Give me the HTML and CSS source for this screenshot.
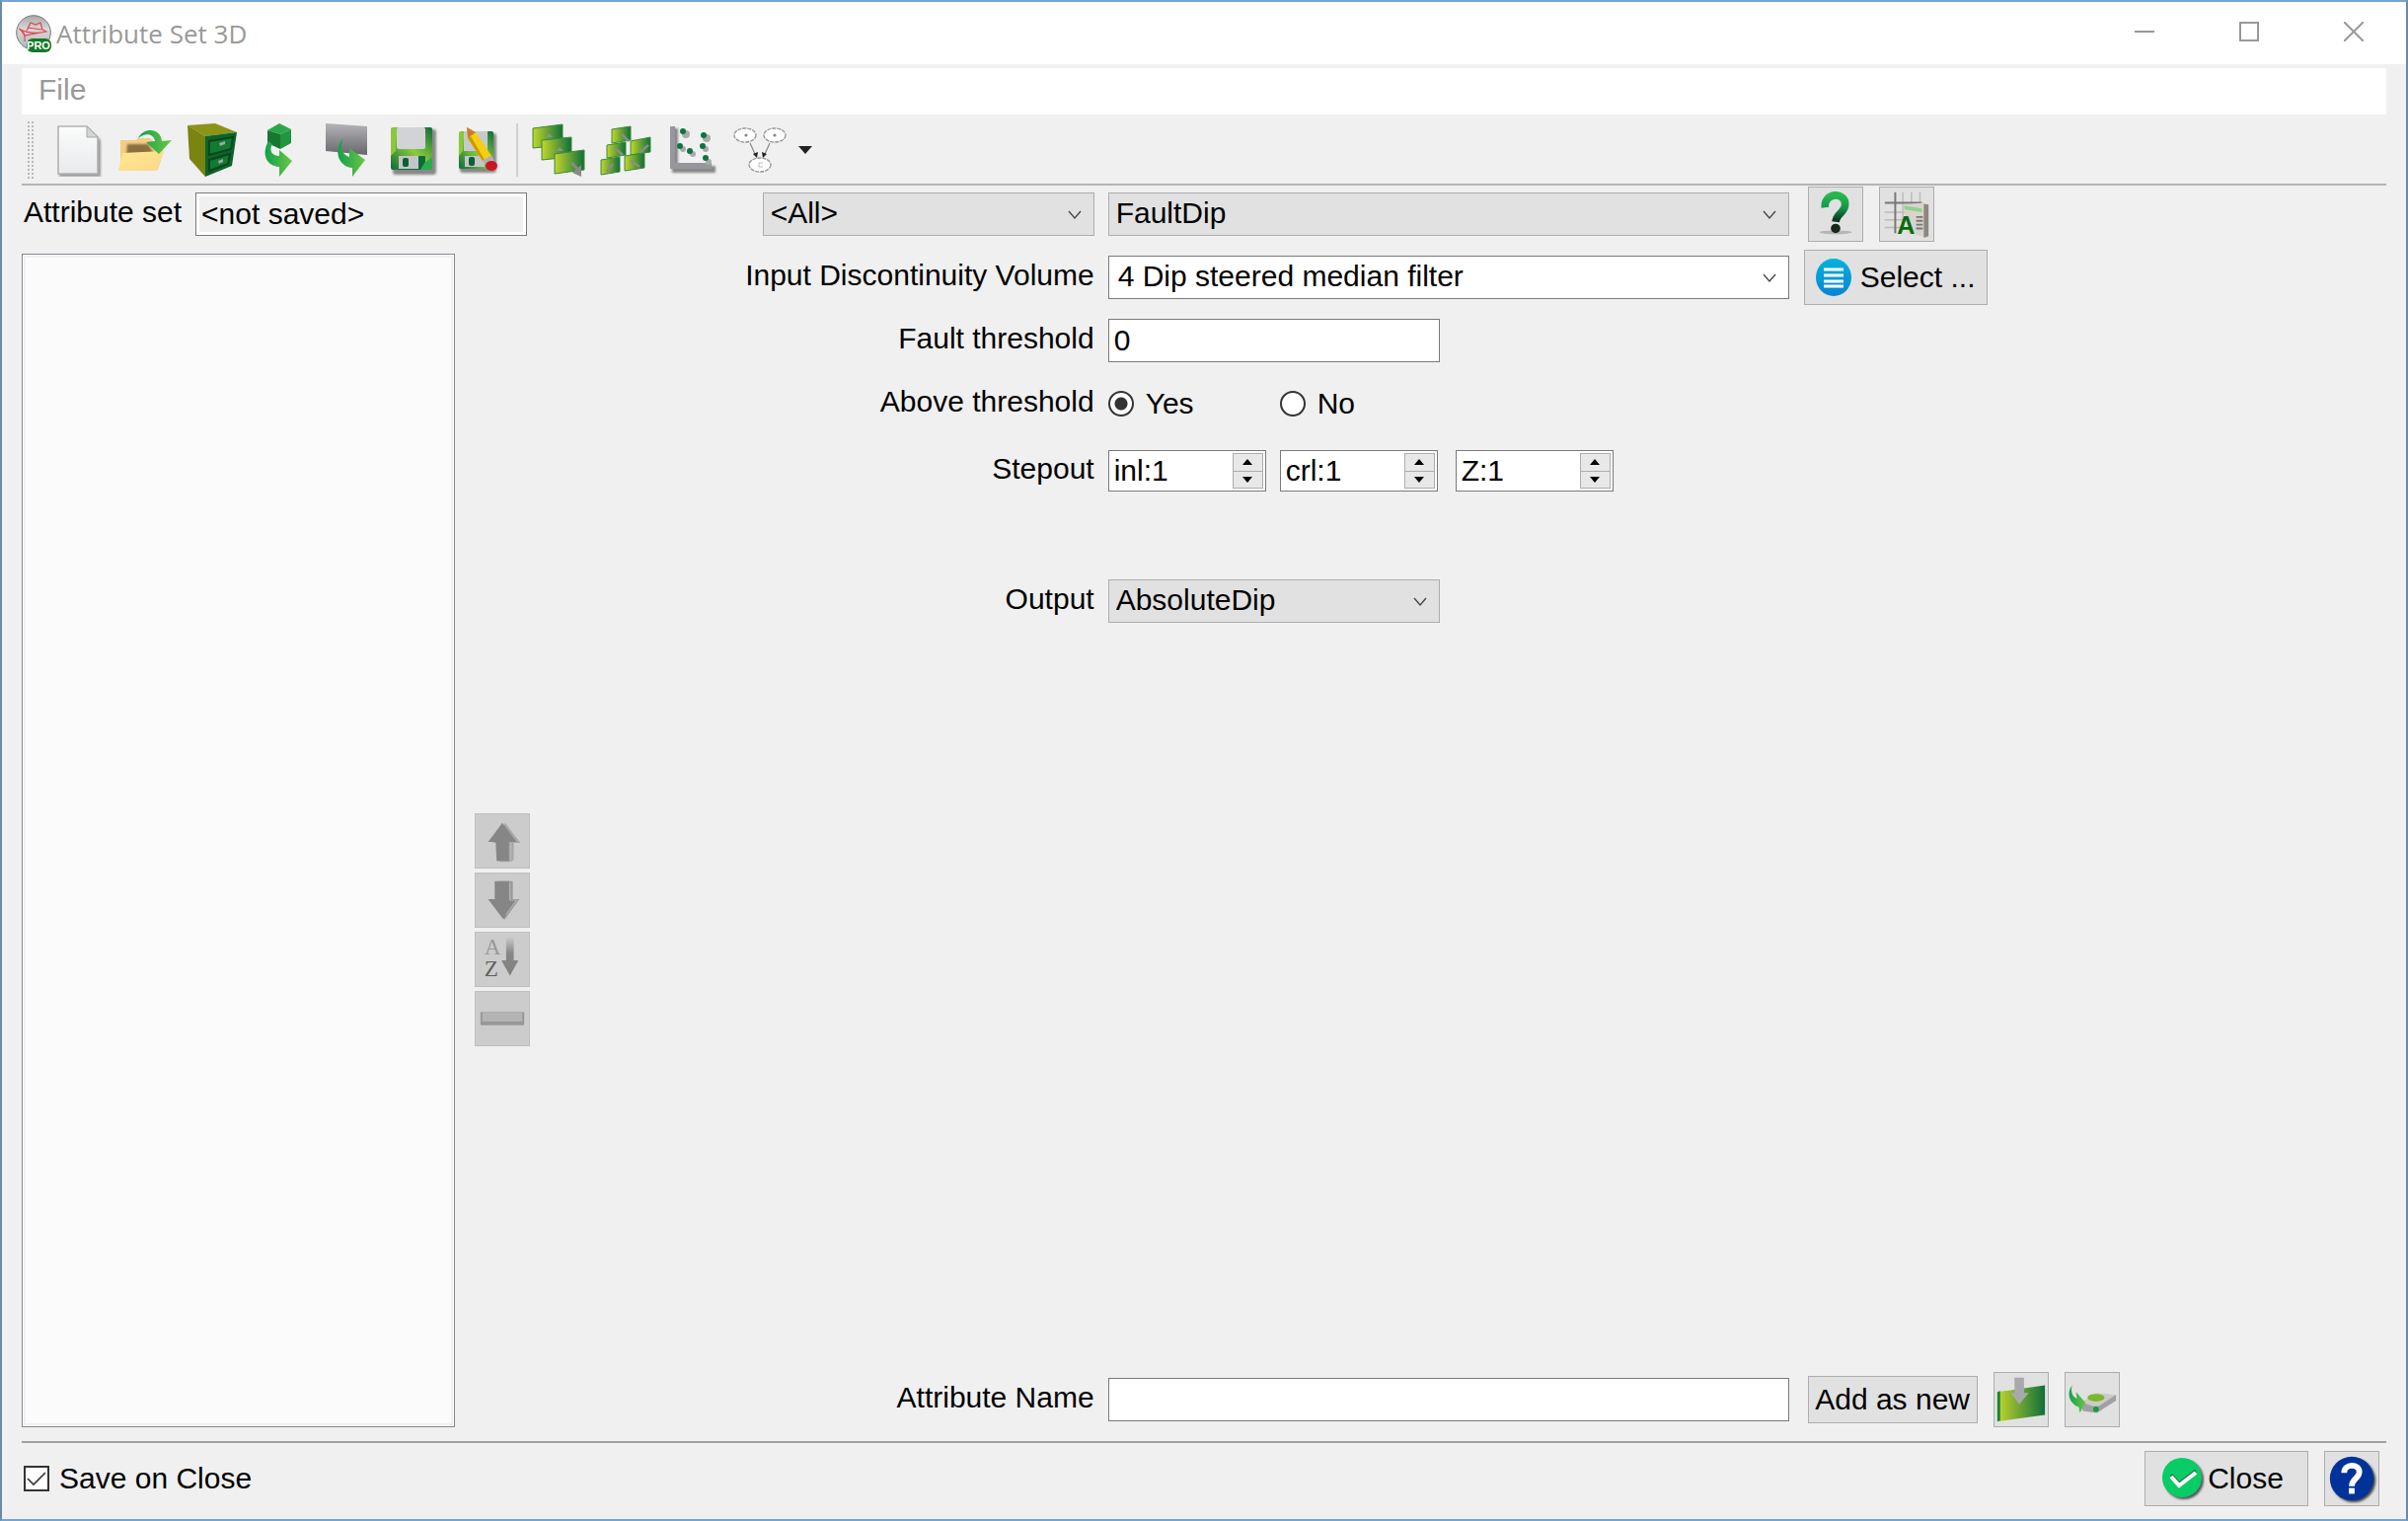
FILE: index.html
```html
<!DOCTYPE html>
<html lang="en">
<head>
  <meta charset="UTF-8">
  <meta name="viewport" content="width=device-width, initial-scale=1.0">
  <title>Attribute Set 3D</title>
  <link rel="stylesheet" href="styles.css">
</head>
<body>
  <!-- shared gradients -->
  <svg class="defs" aria-hidden="true">
    <defs>
      <linearGradient id="panel" x1="0" y1="0" x2="1" y2="0"><stop offset="0" stop-color="#c3d62c"/><stop offset="1" stop-color="#0f6f3c"/></linearGradient>
      <linearGradient id="leaf" x1="0" y1="0" x2="1" y2="0"><stop offset="0" stop-color="#12a04c"/><stop offset="1" stop-color="#6cc644"/></linearGradient>
      <linearGradient id="disk" x1="0" y1="1" x2="1" y2="0"><stop offset="0" stop-color="#0b6b38"/><stop offset="0.5" stop-color="#8ccc3c"/><stop offset="1" stop-color="#0b6b38"/></linearGradient>
      <linearGradient id="paper" x1="0" y1="0" x2="0" y2="1"><stop offset="0" stop-color="#fbfcfc"/><stop offset="1" stop-color="#e8eaeb"/></linearGradient>
      <linearGradient id="steel" x1="0" y1="0" x2="0" y2="1"><stop offset="0" stop-color="#b4b4b8"/><stop offset="1" stop-color="#68686c"/></linearGradient>
      <linearGradient id="folder" x1="0" y1="0" x2="1" y2="1"><stop offset="0" stop-color="#fde98e"/><stop offset="1" stop-color="#fbd78c"/></linearGradient>
      <linearGradient id="mark" x1="0" y1="0" x2="0" y2="1"><stop offset="0" stop-color="#27b84c"/><stop offset="0.5" stop-color="#14924a"/><stop offset="1" stop-color="#0c2a18"/></linearGradient>
      <linearGradient id="blue" x1="0" y1="0" x2="0" y2="1"><stop offset="0" stop-color="#06b2de"/><stop offset="1" stop-color="#0684d2"/></linearGradient>
      <linearGradient id="fade" x1="0" y1="0" x2="0" y2="1"><stop offset="0" stop-color="#c8c8c8"/><stop offset="0.4" stop-color="#888"/><stop offset="1" stop-color="#808080"/></linearGradient>
      <linearGradient id="ball" x1="0" y1="0" x2="0" y2="1"><stop offset="0" stop-color="#a8a8a8"/><stop offset="0.4" stop-color="#d8d8d8"/><stop offset="1" stop-color="#b4b4b4"/></linearGradient>
      <filter id="soft" x="-20%" y="-20%" width="140%" height="140%"><feGaussianBlur stdDeviation="1.2"/></filter>
    </defs>
  </svg>

  <div class="window">
    <header class="titlebar">
      <svg class="app-icon" viewBox="0 0 36 38" aria-hidden="true">
        <circle cx="18" cy="18" r="17.3" fill="url(#ball)" stroke="#777" stroke-width="1"/>
        <path d="M3 14 Q16 21 31 17 L27 15 L25 8 L20 10 L15 8 L11 16 M12 13 L26 15 M4 15 Q10 17 9 27 M5 15 L9 21 L25 18" fill="none" stroke="#e2424c" stroke-width="1.2"/>
        <rect x="11" y="24" width="25" height="14" rx="6" fill="#107a28"/>
        <text x="23" y="35" class="pro">PRO</text>
      </svg>
      <h1 class="title">Attribute Set 3D</h1>
      <div class="window-buttons">
        <button type="button" aria-label="Minimize"><svg width="20" height="20" viewBox="0 0 20 20"><path d="M0 10H20"/></svg></button>
        <button type="button" aria-label="Maximize"><svg width="20" height="20" viewBox="0 0 20 20"><path d="M1 1H19V19H1Z"/></svg></button>
        <button type="button" aria-label="Close window"><svg width="20" height="20" viewBox="0 0 20 20"><path d="M0 0L20 20M20 0L0 20"/></svg></button>
      </div>
    </header>

    <nav class="menubar"><button type="button">File</button></nav>

    <div class="toolbar" role="toolbar" aria-label="Main">
      <span class="handle"></span>
      <button type="button" aria-label="New">
        <svg viewBox="0 0 54 54">
          <path d="M8 5H37L50 17V54H8Z" fill="#999" filter="url(#soft)"/>
          <path d="M7 3H36L47 14V51H7Z" fill="url(#paper)" stroke="#b2b2b4" stroke-width="1.6"/>
          <path d="M36 3V14H47Z" fill="#d4d4d4" stroke="#aaa"/>
        </svg>
      </button>
      <button type="button" aria-label="Open">
        <svg viewBox="0 0 54 54">
          <path d="M2 17H17L20 15H32L46 28L40 47H2Z" fill="#f5cd85"/>
          <path d="M9 21H30L37 32H8Z" fill="#8a7040" filter="url(#soft)"/>
          <path d="M4 30L46 28L39 48H0Z" fill="url(#folder)"/>
          <path d="M20 15C26 3 43 5 44 18L54 17L41 31L28 19L37 18C36 10 27 9 20 15Z" fill="url(#leaf)"/>
        </svg>
      </button>
      <button type="button" aria-label="Open from store">
        <svg viewBox="0 0 54 54">
          <path d="M2 2L30 0L52 9L20 13Z" fill="#8c9418"/>
          <path d="M2 2L20 13V54L4 36Z" fill="#7a8410"/>
          <path d="M20 13L52 9L47 43L20 54Z" fill="#0c6428"/>
          <path d="M24 18L48 14L46 26L24 32ZM24 37L45 31L43 41L24 48Z" fill="#137a32" stroke="#0a451f" stroke-width="2"/>
          <path d="M34 20L40 18V21L35 23ZM33 38L38 36V39L34 41Z" fill="#9aa8a0"/>
        </svg>
      </button>
      <button type="button" aria-label="Import set">
        <svg viewBox="0 0 54 54">
          <path d="M27 0L39 6L28 11L15 7Z" fill="#2da648"/>
          <path d="M15 7L28 11V26L15 20Z" fill="#167830"/>
          <path d="M28 11L39 6V20L28 26Z" fill="#229442"/>
          <path d="M16 18C9 30 13 43 27 44V54L40 38L27 27V33C20 33 16 28 20 21Z" fill="url(#leaf)"/>
        </svg>
      </button>
      <button type="button" aria-label="Import from file">
        <svg viewBox="0 0 54 54">
          <path d="M6 0L48 3V32L6 28Z" fill="url(#steel)"/>
          <path d="M24 15C13 27 19 44 33 45V54L46 37L30 25V34C23 32 20 25 24 15Z" fill="url(#leaf)"/>
        </svg>
      </button>
      <button type="button" aria-label="Save">
        <svg viewBox="0 0 54 54">
          <rect x="6" y="6" width="44" height="46" rx="3" fill="#888" filter="url(#soft)"/>
          <rect x="4" y="4" width="42" height="43" rx="2" fill="url(#disk)"/>
          <path d="M4 5H9V28L4 33Z" fill="#8cc83a"/>
          <rect x="10" y="4" width="29" height="22" rx="2" fill="#d2d3d6"/>
          <rect x="12" y="33" width="27" height="14" rx="1" fill="#0d6a3a"/>
          <rect x="12" y="33" width="20" height="13" fill="#c4c5c8"/>
          <rect x="16" y="35" width="6" height="9" rx="2" fill="#0b6038"/>
          <path d="M38 40L46 34V47H34Z" fill="#2aac4a"/>
        </svg>
      </button>
      <button type="button" aria-label="Save as">
        <svg viewBox="0 0 54 54">
          <rect x="6" y="10" width="37" height="40" rx="3" fill="#888" filter="url(#soft)"/>
          <rect x="5" y="8" width="35" height="38" rx="2" fill="url(#disk)"/>
          <path d="M5 9H9V28L5 33Z" fill="#8cc83a"/>
          <rect x="10" y="8" width="24" height="20" fill="#c8c9cc"/>
          <rect x="11" y="33" width="20" height="11" fill="#c4c5c8"/>
          <rect x="15" y="34" width="6" height="9" rx="2" fill="#0b6038"/>
          <path d="M13 4L22 9L38 33L29 38L14 15Z" fill="#f6cf12"/>
          <path d="M14 15L29 38L31 37L17 13Z" fill="#c99a08"/>
          <path d="M13 4L22 9L14 15Z" fill="#c97c30"/>
          <path d="M29 38L38 32L41 38L34 43Z" fill="#b0b0b4"/>
          <ellipse cx="38" cy="43" rx="6" ry="5" fill="#cc1622"/>
        </svg>
      </button>
      <span class="separator"></span>
      <button type="button" aria-label="Default sets">
        <svg viewBox="0 0 54 54">
          <g fill="url(#panel)" stroke="#3a8c34" stroke-width="1">
            <path d="M1 5L31 1V22L1 25Z"/>
            <path d="M10 17L40 14V34L10 37Z"/>
            <path d="M23 31L53 27V47L23 51Z"/>
          </g>
          <path d="M15 14L17 10L21 14M25 28L28 24L32 28" fill="#909090"/>
          <path d="M40 40L46 46" stroke="#8a8a8a" stroke-width="3"/>
          <path d="M50 42V54L41 50Z" fill="#8a8a8a"/>
        </svg>
      </button>
      <button type="button" aria-label="Import attributes">
        <svg viewBox="0 0 54 54">
          <g fill="url(#panel)" stroke="#3a8c34" stroke-width="1">
            <path d="M13 6L32 3V17L13 20Z"/>
            <path d="M8 22L27 19V32L8 35Z"/>
            <path d="M32 18L52 14V29L32 32Z"/>
            <path d="M2 37L21 34V49L2 52Z"/>
            <path d="M26 33L46 30V45L26 48Z"/>
          </g>
          <path d="M23 11L30 18M17 26L24 32M50 22L42 29M8 49L14 41M32 38L41 44" stroke="#8c8c8c" stroke-width="2.5" fill="none"/>
        </svg>
      </button>
      <button type="button" aria-label="Cross-plot">
        <svg viewBox="0 0 54 54">
          <path d="M6 5H12V43H50V50H6Z" fill="#888" filter="url(#soft)"/>
          <path d="M4 3H9V40H46V46H4Z" fill="#96969c"/>
          <g fill="#aaa"><circle cx="20" cy="11" r="4"/><circle cx="41" cy="15" r="4"/><circle cx="40" cy="26" r="3"/><circle cx="17" cy="26" r="3"/><circle cx="27" cy="31" r="3"/><circle cx="43" cy="39" r="3"/></g>
          <g fill="#0c7440"><circle cx="17" cy="8" r="3"/><circle cx="38" cy="12" r="3"/><circle cx="37" cy="23" r="3"/><circle cx="14" cy="23" r="3"/><circle cx="24" cy="28" r="3"/><circle cx="40" cy="35" r="3"/></g>
        </svg>
      </button>
      <button type="button" aria-label="Evaluate">
        <svg viewBox="0 0 54 54">
          <g fill="#fff" stroke="#999" stroke-width="1.4" stroke-dasharray="4 1"><ellipse cx="12" cy="12" rx="11" ry="7"/><ellipse cx="42" cy="12" rx="11" ry="7"/><ellipse cx="27" cy="42" rx="11" ry="7"/></g>
          <g stroke="#888" stroke-width="1.2"><path d="M17 20L22 31M37 20L32 31"/></g>
          <path d="M20 31L25 29L24 35ZM34 31L29 29L30 35Z" fill="#222"/>
          <g fill="#888"><circle cx="13" cy="12" r="1.6"/><circle cx="42" cy="12" r="1.6"/></g>
          <path d="M30 40H26V44H30" fill="none" stroke="#bbb"/>
        </svg>
      </button>
      <button type="button" class="drop" aria-label="More"><svg viewBox="0 0 14 8"><path d="M0 0H14L7 8Z" fill="#222"/></svg></button>
    </div>

    <main class="content">
      <section class="left">
        <div class="set-row">
          <label for="attrset">Attribute set</label>
          <input id="attrset" class="field readonly" type="text" value="&lt;not saved&gt;" readonly>
        </div>
        <div class="list-row">
          <div class="list" role="listbox" aria-label="Attributes"></div>
          <div class="list-buttons">
            <button type="button" class="tool disabled" aria-label="Move up" disabled>
              <svg viewBox="0 0 56 56"><path d="M31 9L47 30H40V48L36 50H25V30H18Z" fill="#a8a8a8"/><path d="M28 9L43 29H35V49H22L21 29H13Z" fill="#868686"/><path d="M37 30V48" stroke="#bbb"/></svg>
            </button>
            <button type="button" class="tool disabled" aria-label="Move down" disabled>
              <svg viewBox="0 0 56 56"><path d="M24 8H39V27H46L30 49Z" fill="#999"/><path d="M20 8H35V27H43L29 48L13 27H20Z" fill="#868686"/><path d="M36 10V28H43L32 43" stroke="#bbb" fill="none"/></svg>
            </button>
            <button type="button" class="tool disabled" aria-label="Sort" disabled>
              <svg viewBox="0 0 56 56"><text x="9" y="23" class="sort-a">A</text><text x="9" y="46" class="sort-z">Z</text><path d="M32 5H40V29H45L36 45L27 29H32Z" fill="url(#fade)"/></svg>
            </button>
            <button type="button" class="tool disabled" aria-label="Remove" disabled>
              <svg viewBox="0 0 56 56"><rect x="5" y="21" width="46" height="14" rx="1" fill="#989898"/><rect x="7" y="21" width="42" height="10" fill="#b4b4b4"/></svg>
            </button>
          </div>
        </div>
      </section>

      <form class="params">
        <div class="row">
          <select class="combo category" aria-label="Attribute category"><option>&lt;All&gt;</option></select>
          <select class="combo" aria-label="Attribute type"><option>FaultDip</option></select>
          <div class="actions">
            <button type="button" class="tool" aria-label="Attribute help">
              <svg viewBox="0 0 56 56"><ellipse cx="28" cy="47" rx="17" ry="2" fill="#b4b4bc"/><path d="M17 21C15 5 39 4 38 18C38 26 29 27 28 36" fill="none" stroke="url(#mark)" stroke-width="8"/><circle cx="28" cy="43" r="5" fill="#132a1a"/></svg>
            </button>
            <button type="button" class="tool" aria-label="Evaluate attribute">
              <svg viewBox="0 0 56 56">
                <path d="M24 5V44M33 5V44M42 5V44M5 26H42M5 34H42M5 42H42" stroke="#bbb" stroke-width="1.5"/>
                <path d="M16 5V48M5 16H44" stroke="#777" stroke-width="2"/>
                <path d="M24 18L46 16L50 52L30 48Z" fill="#d8d4cc"/>
                <path d="M46 17L51 18V51L46 53Z" fill="#8c8680"/>
                <path d="M25 19L44 22V26L26 23Z" fill="#8cd48c"/>
                <path d="M38 31H45M38 35H45M38 39H45M38 43H45" stroke="#777" stroke-width="2"/>
                <text x="18" y="49" class="calc-a">A</text>
              </svg>
            </button>
          </div>
        </div>
        <div class="row">
          <label for="volume">Input Discontinuity Volume</label>
          <select id="volume" class="combo editable"><option>4 Dip steered median filter</option></select>
          <div class="actions flush">
            <button type="button" class="btn select-btn">
              <svg width="36" height="40" viewBox="0 0 36 40" aria-hidden="true"><ellipse cx="18" cy="20" rx="18" ry="19" fill="url(#blue)"/><path d="M8 12H28M8 18H28M8 24H28M8 29H28" stroke="#fff" stroke-width="3"/></svg>
              Select ...
            </button>
          </div>
        </div>
        <div class="row">
          <label for="threshold">Fault threshold</label>
          <div><input id="threshold" class="field half" type="text" value="0"></div>
        </div>
        <div class="row" role="radiogroup" aria-labelledby="above">
          <span class="label" id="above">Above threshold</span>
          <div class="radios">
            <label class="check"><input type="radio" name="above" checked>Yes</label>
            <label class="check"><input type="radio" name="above">No</label>
          </div>
        </div>
        <div class="row stepout">
          <label for="inl">Stepout</label>
          <div class="spins">
            <div class="spin"><input id="inl" type="text" value="inl:1"><span><button type="button" aria-label="Increase inline"></button><button type="button" class="down" aria-label="Decrease inline"></button></span></div>
            <div class="spin"><input type="text" value="crl:1" aria-label="Crossline stepout"><span><button type="button" aria-label="Increase crossline"></button><button type="button" class="down" aria-label="Decrease crossline"></button></span></div>
            <div class="spin depth"><input type="text" value="Z:1" aria-label="Z stepout"><span><button type="button" aria-label="Increase Z"></button><button type="button" class="down" aria-label="Decrease Z"></button></span></div>
          </div>
        </div>
        <div class="row output">
          <label for="output">Output</label>
          <div><select id="output" class="combo half"><option>AbsoluteDip</option></select></div>
        </div>
        <div class="row name">
          <label for="attrname">Attribute Name</label>
          <input id="attrname" class="field" type="text">
          <div class="actions">
            <button type="button" class="btn add-btn">Add as new</button>
            <button type="button" class="tool" aria-label="Update attribute">
              <svg viewBox="0 0 56 56"><path d="M3 20L53 13V44L3 51Z" fill="url(#panel)"/><path d="M3 20L6 19V50L3 51Z" fill="#14863c"/><path d="M21 5H31V21H36L26 33L17 21H21Z" fill="#a9a9ad"/></svg>
            </button>
            <button type="button" class="tool" aria-label="Save attribute data">
              <svg viewBox="0 0 56 56">
                <path d="M17 31L32 22L53 23V29L33 42L18 40Z" fill="#a0a0a4"/>
                <path d="M17 31L32 21L53 23L33 36Z" fill="#cbcbcd"/>
                <ellipse cx="32" cy="26" rx="9" ry="4" fill="#7cb82c"/>
                <ellipse cx="32" cy="38" rx="3" ry="3" fill="#179a40"/>
                <path d="M7 13C1 20 3 32 14 36L15 42L21 31L11 20L12 27C7 25 5 19 7 13Z" fill="url(#leaf)"/>
              </svg>
            </button>
          </div>
        </div>
      </form>
    </main>

    <footer class="footer">
      <label class="check"><input type="checkbox" checked>Save on Close</label>
      <button type="button" class="btn close-btn">
        <svg width="44" height="46" viewBox="0 0 44 46" aria-hidden="true"><circle cx="23" cy="24" r="20" fill="#555" filter="url(#soft)"/><circle cx="21" cy="22" r="20" fill="#08cc66"/><path d="M10 19L18 28L35 15" fill="none" stroke="#2a7048" stroke-width="3"/><path d="M10 21L18 30L35 17" fill="none" stroke="#fff" stroke-width="4"/></svg>
        Close
      </button>
      <button type="button" class="tool" aria-label="Help">
        <svg viewBox="0 0 56 56"><circle cx="30" cy="30" r="23" fill="#444" filter="url(#soft)"/><circle cx="28" cy="28" r="23" fill="#003399"/><path d="M20 22C20 12 36 12 36 21C36 28 28 28 28 36" fill="none" stroke="#fff" stroke-width="6"/><rect x="25" y="38" width="6" height="6" fill="#fff"/></svg>
      </button>
    </footer>
  </div>
</body>
</html>
```
FILE: styles.css
```css
* {
  box-sizing: border-box;
}
body {
  margin: 0;
  font-family: "Liberation Sans", Arial, sans-serif;
  font-size: 30px;
  line-height: 36px;
  color: #000;
}
button, input, select {
  font: inherit;
  color: inherit;
  margin: 0;
}
button {
  padding: 0;
  border: none;
  background: none;
}
svg {
  display: block;
}
.defs {
  position: absolute;
  width: 0;
  height: 0;
}
.window {
  display: flex;
  flex-direction: column;
  min-height: 100vh;
  background: #f0f0f0;
  border: 2px solid #6a8aa8;
  border-top-color: #74a5d0;
  border-bottom-color: #74a5d0;
}

/* title bar */
.titlebar {
  display: flex;
  align-items: center;
  height: 63px;
  padding-left: 14px;
  background: #fff;
}
.app-icon {
  width: 36px;
  height: 38px;
}
.pro {
  font-size: 11px;
  font-weight: bold;
  fill: #fff;
  text-anchor: middle;
}
.title {
  flex: 1;
  margin: 0 0 0 5px;
  font-family: "Open Sans", "Noto Sans", sans-serif;
  font-size: 26px;
  font-weight: normal;
  color: #999;
}
.window-buttons {
  display: flex;
  align-self: flex-start;
}
.window-buttons button {
  display: flex;
  align-items: center;
  justify-content: center;
  width: 106px;
  height: 60px;
}
.window-buttons path {
  fill: none;
  stroke: #999;
  stroke-width: 2;
}

.menubar {
  height: 47px;
  margin: 4px 20px 0;
  padding-left: 17px;
  background: #fff;
}
.menubar button {
  line-height: 44px;
  color: #999;
}

/* toolbar */
.toolbar {
  display: flex;
  align-items: center;
  gap: 14px;
  height: 72px;
  margin: 0 20px;
  padding: 2px 0 0 6px;
  border-bottom: 2px solid #b4b4b4;
}
.toolbar button {
  width: 54px;
  height: 54px;
}
.toolbar .handle {
  width: 6px;
  height: 58px;
  margin-right: 4px;
  border-left: 2px dotted #b8b8b8;
  border-right: 2px dotted #b8b8b8;
}
.toolbar .separator {
  width: 2px;
  height: 54px;
  margin-left: -5px;
  background: #d0d0d0;
}
.toolbar .drop {
  width: 14px;
  height: 8px;
  margin-left: -2px;
}

/* main area */
.content {
  flex: 1;
  display: flex;
  margin: 0 20px;
  padding: 1px 0 14px;
}
.left {
  flex: none;
  display: flex;
  flex-direction: column;
  gap: 12px;
}
.set-row {
  display: flex;
  align-items: center;
  gap: 14px;
  height: 56px;
  padding-left: 2px;
}
.set-row label,
.row > label,
.row > .label {
  padding-bottom: 4px;
}
.set-row .field {
  width: 336px;
}
.list-row {
  flex: 1;
  display: flex;
  align-items: center;
  gap: 20px;
}
.list {
  align-self: stretch;
  width: 439px;
  background: #fbfbfb;
  border: 1px solid #828790;
  box-shadow: inset 0 0 0 1px #fff, inset 0 0 0 3px #f0f0f0;
}
.list-buttons {
  display: flex;
  flex-direction: column;
  gap: 4px;
  padding-top: 180px;
}

.params {
  flex: 1;
  display: flex;
  flex-direction: column;
  gap: 8px;
}
.row {
  display: grid;
  grid-template-columns: 29fr 35fr 30fr;
  align-items: center;
  gap: 14px;
  min-height: 56px;
}
.row > label,
.row > .label {
  text-align: right;
  white-space: nowrap;
}
.stepout {
  margin-top: 4px;
}
.output {
  margin-top: 68px;
}
.name {
  margin-top: auto;
}

/* controls */
.field {
  width: 100%;
  height: 44px;
  padding: 0 5px;
  background: #fff;
  border: 1px solid #7a7a7a;
}
.field.readonly {
  background: #f0f0f0;
  box-shadow: inset 0 0 0 3px #fff;
}
.combo {
  appearance: none;
  width: 100%;
  height: 44px;
  padding: 0 40px 2px 7px;
  border: 1px solid #adadad;
  border-radius: 0;
  background: #e1e1e1 url("data:image/svg+xml,%3Csvg xmlns='http://www.w3.org/2000/svg' width='14' height='9'%3E%3Cpath d='M1 1L7 8L13 1' fill='none' stroke='%23444' stroke-width='1.3'/%3E%3C/svg%3E") no-repeat right 12px center;
}
.combo.editable {
  padding-left: 9px;
  background-color: #fff;
  border-color: #7a7a7a;
}
.combo.category {
  justify-self: end;
  width: 336px;
}
.half {
  width: 336px;
}
.actions {
  display: flex;
  align-items: center;
  gap: 16px;
  padding-left: 5px;
}
.actions.flush {
  padding-left: 1px;
}
.tool {
  flex: none;
  width: 56px;
  height: 56px;
  background: #e1e1e1;
  border: 1px solid #adadad;
}
.tool.disabled {
  background: #ccc;
  border-color: #bfbfbf;
}
.btn {
  display: flex;
  align-items: center;
  justify-content: center;
  height: 56px;
  background: #e1e1e1;
  border: 1px solid #adadad;
  white-space: nowrap;
}
.select-btn {
  gap: 9px;
  width: 186px;
}
.add-btn {
  width: 172px;
  height: 48px;
}
.close-btn {
  gap: 3px;
  width: 166px;
  padding-right: 8px;
}
.check {
  display: flex;
  align-items: center;
  gap: 12px;
}
.check input {
  appearance: none;
  width: 26px;
  height: 26px;
  background: #fff;
  border: 2px solid #333;
}
.check input[type="radio"] {
  border-radius: 50%;
}
.check input[type="radio"]:checked {
  background: radial-gradient(circle, #333 0 6px, #fff 7px);
}
.check input[type="checkbox"]:checked {
  background: #fff url("data:image/svg+xml,%3Csvg xmlns='http://www.w3.org/2000/svg' width='22' height='22'%3E%3Cpath d='M2 11L8 17L20 5' fill='none' stroke='%23333' stroke-width='1.6'/%3E%3C/svg%3E") center no-repeat;
}
.radios {
  display: flex;
}
.radios .check {
  width: 174px;
}
.spins {
  display: flex;
  gap: 14px;
}
.spin {
  display: flex;
  width: 160px;
  height: 42px;
  padding: 2px;
  background: #fff;
  border: 1px solid #7a7a7a;
}
.spin.depth {
  margin-left: 4px;
}
.spin input {
  flex: 1;
  min-width: 0;
  padding: 0 3px;
  border: none;
  background: none;
}
.spin span {
  display: flex;
  flex-direction: column;
  width: 31px;
}
.spin button {
  flex: 1;
  display: flex;
  align-items: center;
  justify-content: center;
  background: #e8e8e8;
  border: 1px solid #adadad;
}
.spin button + button {
  border-top: none;
}
.spin button::before {
  content: "";
  border: 5px solid transparent;
  border-top: none;
  border-bottom: 6px solid #000;
}
.spin .down::before {
  border-top: 6px solid #000;
  border-bottom: none;
}

/* text drawn inside icons */
.sort-a,
.sort-z {
  font-family: "Liberation Serif", serif;
  font-size: 24px;
  fill: #999;
}
.sort-z {
  fill: #606060;
}
.calc-a {
  font-size: 26px;
  font-weight: bold;
  fill: #0a6a10;
}

.footer {
  display: flex;
  align-items: center;
  gap: 16px;
  height: 79px;
  margin: 0 20px;
  padding: 0 7px 6px 2px;
  border-top: 2px solid #a0a0a0;
}
.footer .check {
  flex: 1;
  gap: 10px;
}
```
